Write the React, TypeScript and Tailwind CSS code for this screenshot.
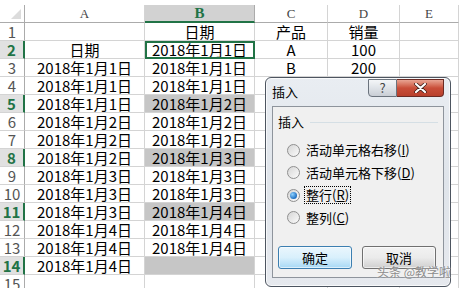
import React from 'react';

const cols = ['A', 'B', 'C', 'D', 'E'];

// [A, B, C, D] per row; row 1..15
const data: string[][] = [
  ['', '日期', '产品', '销量'],
  ['日期', '2018年1月1日', 'A', '100'],
  ['2018年1月1日', '2018年1月1日', 'B', '200'],
  ['2018年1月1日', '2018年1月1日', '', ''],
  ['2018年1月1日', '2018年1月2日', '', ''],
  ['2018年1月2日', '2018年1月2日', '', ''],
  ['2018年1月2日', '2018年1月2日', '', ''],
  ['2018年1月2日', '2018年1月3日', '', ''],
  ['2018年1月3日', '2018年1月3日', '', ''],
  ['2018年1月3日', '2018年1月3日', '', ''],
  ['2018年1月3日', '2018年1月4日', '', ''],
  ['2018年1月4日', '2018年1月4日', '', ''],
  ['2018年1月4日', '2018年1月4日', '', ''],
  ['2018年1月4日', '', '', ''],
  ['', '', '', ''],
];

const picked = [2, 5, 8, 11, 14];

function Radio({ on }: { on?: boolean }) {
  return (
    <span className="w-[13px] h-[13px] rounded-full border border-[#8f8f8f] bg-gradient-to-br from-[#d6d6d6] to-[#fbfbfb] flex items-center justify-center shrink-0">
      {on && <span className="w-[7px] h-[7px] rounded-full bg-[radial-gradient(circle_at_35%_35%,#8ed1ff,#1f6fc1_70%)]" />}
    </span>
  );
}

function Option({ label, keyChar, on, focus }: { label: string; keyChar: string; on?: boolean; focus?: boolean }) {
  return (
    <div className="flex items-center gap-[5px] h-[22.5px] pl-[14px]">
      <Radio on={on} />
      <span className={focus ? 'outline outline-1 outline-dotted outline-black px-[1px] leading-[16px]' : 'px-[1px] leading-[16px]'}>
        {label}(<span className="underline">{keyChar}</span>)
      </span>
    </div>
  );
}

export default function App() {
  return (
    <div className="relative w-[459px] h-[288px] overflow-hidden bg-white text-black" style={{ fontFamily: '"Noto Sans CJK SC", sans-serif' }}>
      <div className="h-[5px]" />
      <div className="grid grid-cols-[25px_120px_110px_73px_72px_59px] auto-rows-[18px] leading-[17px]">
        {/* corner */}
        <div className="border-r border-b border-[#ababab] flex items-end justify-end p-[3px]">
          <svg width="10" height="10" viewBox="0 0 10 10"><polygon points="10,0 10,10 0,10" fill="#dcdcdc" /></svg>
        </div>
        {cols.map((c) => (
          <div
            key={c}
            className={
              c === 'B'
                ? 'bg-[#d2d2d2] border-r border-[#ababab] border-b-2 border-b-[#217346] text-[#217346] font-bold flex items-center justify-center text-[15px]'
                : 'border-r border-[#d4d4d4] border-b border-b-[#ababab] text-[#444] flex items-center justify-center text-[13px]'
            }
            style={{ fontFamily: '"Liberation Serif", serif' }}
          >
            {c}
          </div>
        ))}
        {data.map((r, i) => {
          const n = i + 1;
          const sel = picked.includes(n);
          return (
            <React.Fragment key={n}>
              <div
                className={
                  sel
                    ? 'bg-[#e1e1e1] border-r-2 border-r-[#217346] border-b border-b-[#d4d4d4] text-[#217346] font-bold flex items-center justify-center text-[15px]'
                    : 'border-r border-r-[#ababab] border-b border-b-[#d4d4d4] text-[#555] flex items-center justify-center text-[15px]'
                }
              >
                {n}
              </div>
              {r.map((v, j) => {
                const isB = j === 1;
                let cls = 'border-r border-b border-[#d4d4d4] flex items-center justify-center text-[15px] whitespace-nowrap';
                if (isB && n === 2) cls += ' outline outline-2 -outline-offset-2 outline-[#217346]';
                if (isB && sel && n !== 2) cls += ' bg-[#c6c6c6] border-[#b4b4b4]';
                return (
                  <div key={j} className={cls}>
                    {v}
                  </div>
                );
              })}
              <div className="border-r border-b border-[#d4d4d4]" />
            </React.Fragment>
          );
        })}
      </div>

      {/* Insert dialog */}
      <div className="absolute left-[265px] top-[77px] w-[186px] h-[210px] rounded-[6px] border border-[#4d5560] bg-gradient-to-b from-[#e9edf2] via-[#dfe4ea] to-[#e6e9ee] shadow-[0_0_0_1px_rgba(255,255,255,0.7)_inset] flex flex-col text-[13px]">
        <div className="h-[28px] flex items-start justify-between pl-[6px]">
          <span className="mt-[5px] leading-[18px]">插入</span>
          <div className="flex mt-[1px] mr-[6px]">
            <div className="w-[29px] h-[18px] rounded-bl-[4px] border border-[#6b737d] bg-gradient-to-b from-[#f4f6f8] via-[#dfe3e8] to-[#c9ced5] flex items-center justify-center text-[13px] leading-[16px] text-[#444]">
              ?
            </div>
            <div className="w-[47px] h-[18px] rounded-br-[4px] border border-l-0 border-[#6b2a23] bg-gradient-to-b from-[#e8a493] via-[#c94e39] to-[#b8402c] flex items-center justify-center">
              <svg width="13" height="10" viewBox="0 0 13 10">
                <path d="M2 1 L11 9 M11 1 L2 9" stroke="#3a1b16" strokeWidth="3.6" strokeLinecap="round" />
                <path d="M2 1 L11 9 M11 1 L2 9" stroke="#fff" strokeWidth="2.2" strokeLinecap="round" />
              </svg>
            </div>
          </div>
        </div>
        <div className="mx-[6px] flex-1 mb-[8px] border border-[#8e949c] bg-[#f0f0f0] flex flex-col">
          <div className="flex items-center gap-[6px] pl-[5px] pr-[5px] mt-[7px] h-[16px] leading-[16px]">
            <span>插入</span>
            <span className="flex-1 h-px bg-[#d5dfe5]" />
          </div>
          <div className="mt-[9px] flex flex-col">
            <Option label="活动单元格右移" keyChar="I" />
            <Option label="活动单元格下移" keyChar="D" />
            <Option label="整行" keyChar="R" on focus />
            <Option label="整列" keyChar="C" />
          </div>
          <div className="flex gap-[10px] pl-[5px] mt-[17px] leading-[16px]">
            <div className="w-[74px] h-[23px] rounded-[3px] border border-[#3c7fb1] bg-gradient-to-b from-[#eaf6fd] via-[#d9f0fc] to-[#a7d9f5] flex items-center justify-center shadow-[inset_0_0_0_1px_rgba(255,255,255,0.6)]">
              确定
            </div>
            <div className="w-[74px] h-[23px] rounded-[3px] border border-[#707070] bg-gradient-to-b from-[#f2f2f2] via-[#ebebeb] to-[#cfcfcf] flex items-center justify-center shadow-[inset_0_0_0_1px_rgba(255,255,255,0.6)]">
              取消
            </div>
          </div>
        </div>
      </div>

      {/* watermark */}
      <div className="absolute left-[377px] top-[265px] text-[12px] leading-[14px] text-[#8c8c8c] [text-shadow:0_0_2px_rgba(255,255,255,0.9)]">
        头条 @教学啦
      </div>
    </div>
  );
}
